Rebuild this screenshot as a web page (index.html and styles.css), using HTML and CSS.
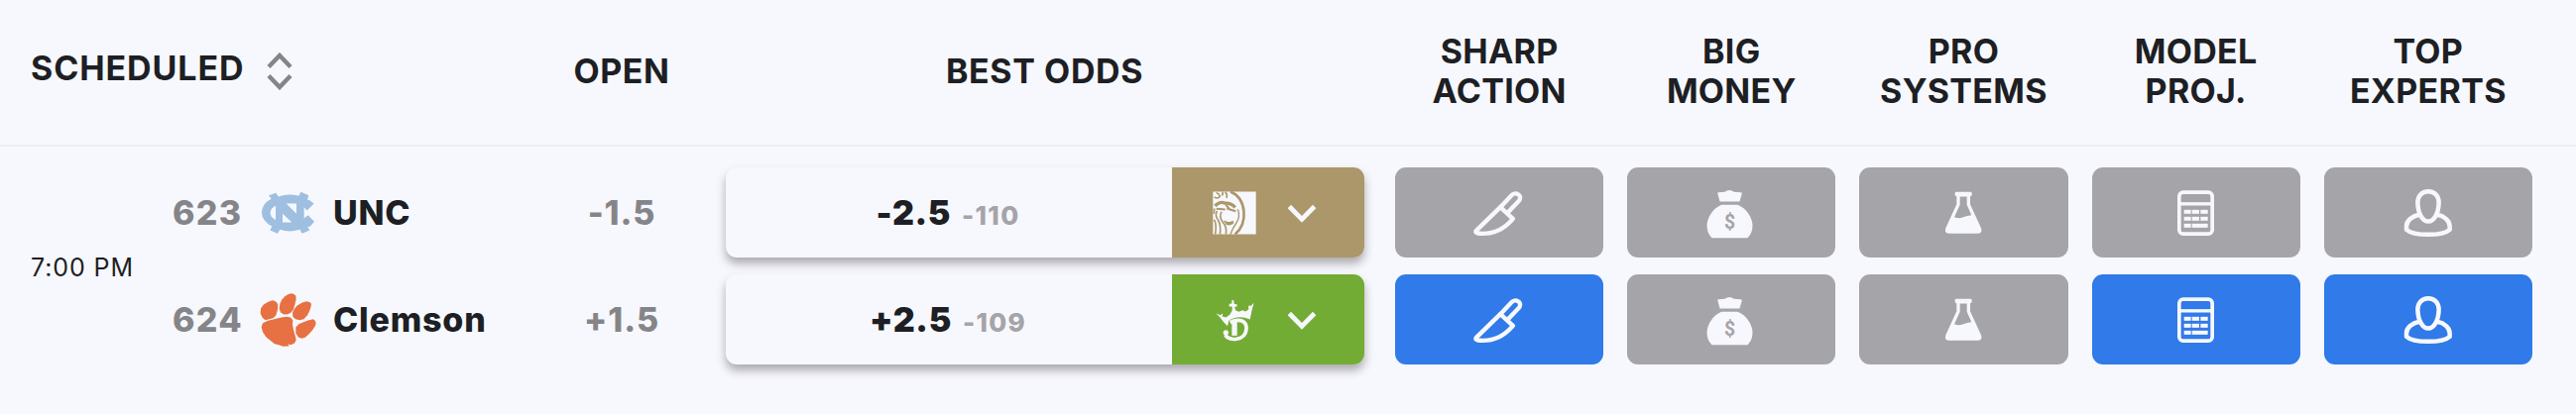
FILE: index.html
```html
<!DOCTYPE html>
<html lang="en">
<head>
  <meta charset="UTF-8">
  <meta name="viewport" content="width=device-width, initial-scale=1.0">
  <title>PRO Report</title>
  <link rel="stylesheet" href="styles.css">
</head>
<body>
  <!-- Shared icons -->
  <svg class="sprite" aria-hidden="true">
    <symbol id="icon-knife" viewBox="37.5 13.5 180 180">
      <g fill="none" stroke="currentColor" stroke-width="13" stroke-linejoin="round" stroke-linecap="round">
        <path d="M131 86 L164 51 C175 38 199 48 188 66 L153 103"/>
        <path d="M131 86 L58 157 C55 161 57 164 62 165 C105 170 140 156 169 121 L131 86"/>
      </g>
    </symbol>
    <symbol id="icon-money" viewBox="49.5 13.5 180 180">
      <path fill="currentColor" d="M98 43 Q98 41 102 41 L120 40 Q134 29 148 40 L168 41 Q172 41 172 44 L165 69 L105 69 Z"/>
      <path fill="currentColor" d="M110 79 H159 C187 90 204 120 204 142 C204 159 198 171 189 179 H81 C72 171 66 159 66 142 C66 120 83 90 110 79 Z"/>
      <text class="bag-sign" x="135" y="152" text-anchor="middle">$</text>
    </symbol>
    <symbol id="icon-flask" viewBox="48 13.5 180 180">
      <path fill="currentColor" fill-rule="evenodd" d="M116 40 H160 Q164 40 164 44 V49 Q164 53 159 53 V77 L192 149 Q197 166 181 166 H96 Q80 166 85 149 L118 77 V53 Q113 53 113 49 V44 Q113 40 116 40 Z M128 54 V79 L111 116 Q124 122 138 116 Q150 111 163 110 L149 79 V54 Z"/>
    </symbol>
    <symbol id="icon-calc" viewBox="46 13.5 180 180">
      <rect x="84.500" y="41" width="100" height="126" rx="12" fill="none" stroke="currentColor" stroke-width="11"/>
      <g fill="currentColor">
        <rect x="84" y="71" width="100" height="10"/>
        <rect x="99" y="94" width="21" height="12"/>
        <rect x="123" y="94" width="22" height="12"/>
        <rect x="149" y="94" width="22" height="12"/>
        <rect x="99" y="115" width="21" height="12"/>
        <rect x="123" y="115" width="22" height="12"/>
        <rect x="149" y="115" width="22" height="12"/>
        <rect x="99" y="136" width="21" height="12"/>
        <rect x="123" y="136" width="48" height="12"/>
      </g>
    </symbol>
    <symbol id="icon-expert" viewBox="42 13.500 180 180">
      <g fill="none" stroke="currentColor" stroke-width="13.500" stroke-linejoin="round">
        <path d="M132 38 C112 38 100 53 100 72 C101 105 114 129 132 129 C150 129 163 105 164 72 C164 53 152 38 132 38 Z"/>
        <path d="M105 109 C83 113 66 127 66 144 V154 C78 165 105 169 132 169 C159 169 185 165 197 154 V144 C197 127 181 113 159 109"/>
      </g>
    </symbol>
    <symbol id="icon-chevron" viewBox="354 118.5 90 60">
      <path fill="none" stroke="currentColor" stroke-width="14" d="M361 129 L399 168 L437 129"/>
    </symbol>
  </svg>

  <div class="odds-table">
    <div class="row header">
      <div class="head head-scheduled">
        <span>Scheduled</span>
        <svg class="sort" viewBox="0 0 26 38">
          <path d="M2 14.500 L13 3 L24 14.500 M2 23.500 L13 35 L24 23.500"/>
        </svg>
      </div>
      <div class="head head-single">Open</div>
      <div class="head head-single">Best Odds</div>
      <div class="head">Sharp<br>Action</div>
      <div class="head">Big<br>Money</div>
      <div class="head">Pro<br>Systems</div>
      <div class="head">Model<br>Proj.</div>
      <div class="head">Top<br>Experts</div>
    </div>

    <div class="row game">
      <div class="scheduled">
        <div class="time">7:00 PM</div>
        <div class="teams">
          <div class="team">
            <span class="rotation">623</span>
            <svg class="team-logo" viewBox="33 13.5 180 180">
              <path fill="#9fbfe1" fill-rule="evenodd" d="M63 50 L85 43 L92 54 Q123 43 154 52 L160 40 L184 50 L180 64 L187 65 L200 75 L179 96 L170 86 V120 L182 110 L201 130 L188 145 L181 146 L187 156 L164 166 L157 154 Q125 164 97 154 L90 166 L67 156 L73 144 Q42 128 42 103 Q42 76 71 61 Z M84 82 Q68 90 68 103 Q68 117 84 125 Z M116 75 H147 V106 Z M105 106 L133 132 H105 Z"/>
            </svg>
            <span class="name">UNC</span>
          </div>
          <div class="team">
            <span class="rotation">624</span>
            <svg class="team-logo" viewBox="33 337.5 180 180">
              <g fill="#e77143">
                <path d="M131 347 L138 349 L145 354 L146 363 L143 378 L138 395 L130 406 L121 410 L109 411 L99 405 L95 392 L97 379 L103 366 L112 356 L121 350 Z"/>
                <path d="M69 370 L77 368 L86 373 L91 381 L90 396 L85 414 L76 422 L64 425 L53 428 L44 421 L38 408 L39 393 L47 382 L57 375 Z"/>
                <path d="M166 374 L178 371 L188 374 L192 379 L190 391 L186 401 L180 413 L169 425 L157 428 L144 425 L136 418 L135 405 L141 394 L149 384 Z"/>
                <path d="M182 429 L197 425 L203 429 L206 438 L203 447 L195 459 L184 471 L173 481 L162 484 L152 479 L145 467 L145 450 L154 440 L168 434 Z"/>
                <path d="M45 437 L61 430 L80 425 L101 420 L118 418 L129 420 L136 428 L135 442 L138 457 L141 469 L144 478 L146 490 L140 499 L129 503 L121 500 L125 507 L106 508 L94 503 L81 500 L68 490 L55 479 L45 464 L41 449 Z"/>
              </g>
            </svg>
            <span class="name">Clemson</span>
          </div>
        </div>
      </div>

      <div class="pair open">
        <div>-1.5</div>
        <div>+1.5</div>
      </div>

      <div class="pair">
        <div class="best">
          <div class="line"><span class="spread">-2.5</span><span class="price">-110</span></div>
          <div class="book mgm">
            <svg class="book-logo" viewBox="104 58.5 180 180">
              <rect x="129" y="84" width="130" height="129" fill="#f7f8fd"/>
              <g fill="none" stroke="#ab976a" stroke-linecap="butt">
                <path stroke-width="8" d="M182 84 C231 105 236 179 196 213"/>
                <path stroke-width="5" d="M133 100 Q143 108 150 98 Q148 90 139 87 M156 96 Q161 88 157 85 M166 85 Q174 93 170 103"/>
                <path stroke-width="10" d="M135 127 Q151 112 165 119 Q185 118 196 132"/>
                <path stroke-width="6" d="M139 136 L166 138 M171 135 L198 143 M168 124 L180 138"/>
                <path stroke-width="5" d="M133 135 L132 151 M141 142 Q134 157 145 171 Q154 187 150 213 M155 145 Q146 160 159 177 Q172 191 168 213 M132 169 Q141 181 136 213"/>
                <path stroke-width="6" d="M163 173 Q175 184 191 174 M168 180 Q179 187 190 178"/>
                <path stroke-width="4" d="M204 137 Q213 160 199 180 Q188 195 182 213"/>
              </g>
            </svg>
            <svg class="chevron"><use href="#icon-chevron"/></svg>
          </div>
        </div>
        <div class="best">
          <div class="line"><span class="spread">+2.5</span><span class="price">-109</span></div>
          <div class="book draftkings">
            <svg class="book-logo" viewBox="104 382.5 180 180">
              <g fill="currentColor">
                <path d="M138 452 L151 458 L159 453 L157 462 L168 465 L180 457 L187 444 L187 432 L178 432 L178 424 L186 423 L186 412 L192 414 L193 424 L202 426 L201 433 L194 433 L198 444 L208 448 L218 443 L228 447 L237 440 L236 430 L244 430 L253 421 L247 442 L241 471 Q204 456 177 475 L173 491 L162 480 L151 466 Z"/>
                <path d="M186 477 H202 V520 H186 Z"/>
              </g>
              <path fill="none" stroke="currentColor" stroke-width="11" d="M181 480 C210 466 231 476 230 499 C228 537 176 538 166 518"/>
              <circle cx="168" cy="511" r="8" fill="currentColor"/>
            </svg>
            <svg class="chevron"><use href="#icon-chevron"/></svg>
          </div>
        </div>
      </div>

      <div class="pair">
        <div class="signal"><svg><use href="#icon-knife"/></svg></div>
        <div class="signal active"><svg><use href="#icon-knife"/></svg></div>
      </div>
      <div class="pair">
        <div class="signal"><svg><use href="#icon-money"/></svg></div>
        <div class="signal"><svg><use href="#icon-money"/></svg></div>
      </div>
      <div class="pair">
        <div class="signal"><svg><use href="#icon-flask"/></svg></div>
        <div class="signal"><svg><use href="#icon-flask"/></svg></div>
      </div>
      <div class="pair">
        <div class="signal"><svg><use href="#icon-calc"/></svg></div>
        <div class="signal active"><svg><use href="#icon-calc"/></svg></div>
      </div>
      <div class="pair">
        <div class="signal"><svg><use href="#icon-expert"/></svg></div>
        <div class="signal active"><svg><use href="#icon-expert"/></svg></div>
      </div>
    </div>
  </div>
</body>
</html>
```
FILE: styles.css
```css
* {
  box-sizing: border-box;
}
body {
  margin: 0;
  background-color: #f7f8fd;
  color: #1d1f24;
  font-family: Inter, "Liberation Sans", sans-serif;
  height: 418px;
  overflow: hidden;
}
.sprite {
  display: none;
}
.row {
  display: grid;
  grid-template-columns: 542px 170px 683px repeat(5, 234.2px) 1fr;
}

/* Header */
.header {
  height: 148px;
  border-bottom: 2px solid #edeef2;
}
.head {
  display: flex;
  align-items: center;
  justify-content: center;
  text-align: center;
  text-transform: uppercase;
  font-size: 34px;
  font-weight: 700;
  line-height: 40px;
  letter-spacing: 0.3px;
  padding-bottom: 3px;
}
.head-single {
  letter-spacing: 0.6px;
}
.head-scheduled {
  justify-content: flex-start;
  padding: 0 0 9px 31px;
  gap: 23px;
  letter-spacing: 0.9px;
}
.sort {
  width: 26px;
  height: 38px;
  margin-top: 7px;
  fill: none;
  stroke: #858589;
  stroke-width: 4.4;
}

/* Game */
.game {
  padding-top: 21px;
}
.scheduled {
  display: flex;
  align-items: center;
  padding-left: 31px;
}
.time {
  width: 143px;
  padding-top: 2px;
  font-size: 25px;
  letter-spacing: 0.9px;
}
.teams,
.pair {
  display: flex;
  flex-direction: column;
  gap: 17px;
}
.team {
  height: 91px;
  display: flex;
  align-items: center;
  font-size: 34px;
  font-weight: 800;
}
.rotation {
  width: 87px;
  color: #858589;
  letter-spacing: 1.3px;
}
.team-logo {
  width: 60px;
  height: 60px;
  margin-right: 15px;
}
.name {
  letter-spacing: 0.8px;
}
.open div {
  height: 91px;
  display: flex;
  align-items: center;
  justify-content: center;
  color: #858589;
  font-size: 34px;
  font-weight: 800;
  letter-spacing: 0.9px;
}

/* Best odds */
.best {
  display: flex;
  height: 91px;
  margin: 0 19px 0 20px;
  border-radius: 11px;
  background-color: #f7f8fd;
  box-shadow: 0 6px 10px rgba(40, 30, 40, 0.36);
}
.line {
  flex: 1;
  display: flex;
  align-items: baseline;
  justify-content: center;
  gap: 11px;
  padding-right: 2px;
  line-height: 91px;
}
.spread {
  font-size: 34px;
  font-weight: 900;
  letter-spacing: 0.6px;
}
.price {
  font-size: 26px;
  font-weight: 800;
  letter-spacing: 1.3px;
  color: #a5a4a9;
}
.book {
  width: 194px;
  display: flex;
  align-items: center;
  padding-left: 33px;
  gap: 23px;
  border-radius: 0 11px 11px 0;
  color: #f7f8fd;
}
.mgm {
  background-color: #ab976a;
}
.draftkings {
  background-color: #73ac35;
}
.book-logo {
  width: 60px;
  height: 60px;
}
.chevron {
  width: 30px;
  height: 20px;
}

/* Signals */
.signal {
  display: flex;
  align-items: center;
  justify-content: center;
  height: 91px;
  margin: 0 12px;
  border-radius: 11px;
  background-color: #a5a4a9;
  color: #f7f8fd;
}
.signal.active {
  background-color: #307ae9;
}
.signal svg {
  width: 60px;
  height: 60px;
}
.bag-sign {
  fill: #a5a4a9;
  font-family: Roboto, sans-serif;
  font-size: 58px;
  font-weight: 700;
}
```
